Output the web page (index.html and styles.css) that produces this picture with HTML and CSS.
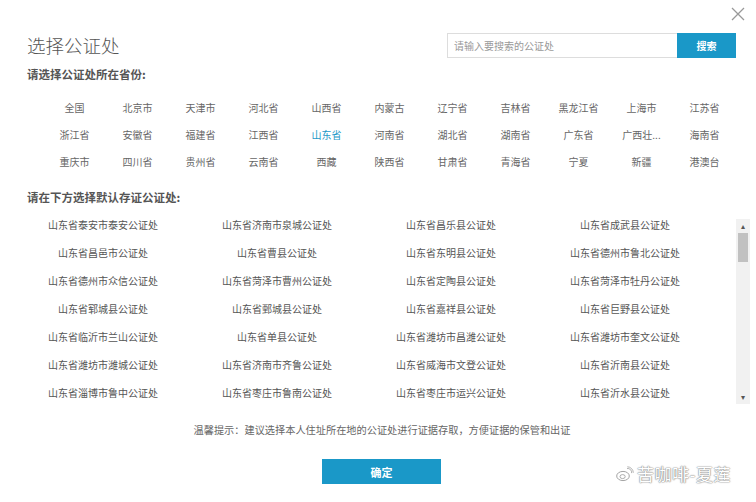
FILE: index.html
```html
<!DOCTYPE html>
<html lang="zh-CN">
<head>
    <meta charset="UTF-8">
    <meta name="viewport" content="width=device-width, initial-scale=1.0">
    <title>选择公证处</title>
    <link rel="stylesheet" href="styles.css">
</head>
<body>

    <div class="dialog">
        <!-- Close -->
        <a class="close-btn" href="#">
            <svg width="14" height="14" viewBox="0 0 14 14"><path d="M1 1L13 13M13 1L1 13" stroke="#999" stroke-width="1.3" fill="none"/></svg>
        </a>

        <!-- Header -->
        <div class="header">
            <h1>选择公证处</h1>
            <div class="search">
                <input type="text" placeholder="请输入要搜索的公证处">
                <button class="search-btn">搜索</button>
            </div>
        </div>

        <div class="label">请选择公证处所在省份:</div>

        <div class="provinces">
            <div class="prov">全国</div>
            <div class="prov">北京市</div>
            <div class="prov">天津市</div>
            <div class="prov">河北省</div>
            <div class="prov">山西省</div>
            <div class="prov">内蒙古</div>
            <div class="prov">辽宁省</div>
            <div class="prov">吉林省</div>
            <div class="prov">黑龙江省</div>
            <div class="prov">上海市</div>
            <div class="prov">江苏省</div>
            <div class="prov">浙江省</div>
            <div class="prov">安徽省</div>
            <div class="prov">福建省</div>
            <div class="prov">江西省</div>
            <div class="prov active">山东省</div>
            <div class="prov">河南省</div>
            <div class="prov">湖北省</div>
            <div class="prov">湖南省</div>
            <div class="prov">广东省</div>
            <div class="prov">广西壮...</div>
            <div class="prov">海南省</div>
            <div class="prov">重庆市</div>
            <div class="prov">四川省</div>
            <div class="prov">贵州省</div>
            <div class="prov">云南省</div>
            <div class="prov">西藏</div>
            <div class="prov">陕西省</div>
            <div class="prov">甘肃省</div>
            <div class="prov">青海省</div>
            <div class="prov">宁夏</div>
            <div class="prov">新疆</div>
            <div class="prov">港澳台</div>
        </div>

        <div class="label label-office">请在下方选择默认存证公证处:</div>

        <!-- Office list -->
        <div class="office-box">
            <div class="offices">
                <div class="office">山东省泰安市泰安公证处</div>
                <div class="office">山东省济南市泉城公证处</div>
                <div class="office">山东省昌乐县公证处</div>
                <div class="office">山东省成武县公证处</div>
                <div class="office">山东省昌邑市公证处</div>
                <div class="office">山东省曹县公证处</div>
                <div class="office">山东省东明县公证处</div>
                <div class="office">山东省德州市鲁北公证处</div>
                <div class="office">山东省德州市众信公证处</div>
                <div class="office">山东省菏泽市曹州公证处</div>
                <div class="office">山东省定陶县公证处</div>
                <div class="office">山东省菏泽市牡丹公证处</div>
                <div class="office">山东省郓城县公证处</div>
                <div class="office">山东省鄄城县公证处</div>
                <div class="office">山东省嘉祥县公证处</div>
                <div class="office">山东省巨野县公证处</div>
                <div class="office">山东省临沂市兰山公证处</div>
                <div class="office">山东省单县公证处</div>
                <div class="office">山东省潍坊市昌潍公证处</div>
                <div class="office">山东省潍坊市奎文公证处</div>
                <div class="office">山东省潍坊市潍城公证处</div>
                <div class="office">山东省济南市齐鲁公证处</div>
                <div class="office">山东省威海市文登公证处</div>
                <div class="office">山东省沂南县公证处</div>
                <div class="office">山东省淄博市鲁中公证处</div>
                <div class="office">山东省枣庄市鲁南公证处</div>
                <div class="office">山东省枣庄市运兴公证处</div>
                <div class="office">山东省沂水县公证处</div>
            </div>
            <div class="scrollbar">
                <div class="arrow">&#9652;</div>
                <div class="thumb"></div>
                <div class="track"></div>
                <div class="arrow">&#9662;</div>
            </div>
        </div>

        <div class="hint">温馨提示：建议选择本人住址所在地的公证处进行证据存取，方便证据的保管和出证</div>

        <div class="footer">
            <button class="ok-btn">确定</button>
        </div>

        <!-- Watermark -->
        <div class="watermark">
            <svg width="18" height="16" viewBox="0 0 18 16"><ellipse cx="7" cy="10" rx="6.3" ry="4.6" fill="#fff" stroke="#999" stroke-width="0.9"/><ellipse cx="6.6" cy="10.6" rx="2.6" ry="2" fill="none" stroke="#999" stroke-width="0.8"/><path d="M11 2.5a4 4 0 0 1 4.6 4.6M11.3 0.8a6 6 0 0 1 6 6" stroke="#aaa" stroke-width="0.9" fill="none"/></svg>
            <span>苦咖啡-夏莲</span>
        </div>
    </div>

</body>
</html>
```

FILE: styles.css
```css
* {
    margin: 0;
    padding: 0;
    box-sizing: border-box;
    font-family: "Noto Sans CJK SC", "Microsoft YaHei", sans-serif;
}
body {
    background: #fff;
    color: #555;
    width: 756px;
    height: 502px;
    overflow: hidden;
}
.dialog {
    position: relative;
    height: 502px;
    padding-top: 33px;
}
.close-btn {
    position: absolute;
    top: 7px;
    right: 11px;
    display: block;
    width: 14px;
    height: 14px;
}
.close-btn svg {
    display: block;
}
.header {
    display: flex;
    justify-content: space-between;
    align-items: center;
    height: 25px;
    padding: 0 20px 0 27px;
}
h1 {
    font-size: 18.5px;
    font-weight: 300;
    color: #555;
    line-height: 25px;
}
.search {
    display: flex;
    height: 25px;
}
.search input {
    width: 230px;
    height: 25px;
    border: 1px solid #ddd;
    border-right: none;
    padding: 0 6px;
    font-size: 10px;
    color: #555;
    outline: none;
}
.search input::placeholder {
    color: #999;
}
.search-btn {
    width: 59px;
    height: 25px;
    border: none;
    background: #1a98c8;
    color: #fff;
    font-size: 10px;
    font-weight: bold;
}
.label {
    margin: 9px 0 0 27px;
    font-size: 11.5px;
    font-weight: bold;
    color: #555;
    line-height: 14px;
}
.provinces {
    display: grid;
    grid-template-columns: repeat(11, 63px);
    grid-auto-rows: 27px;
    margin: 13px 0 0 43px;
}
.prov {
    text-align: center;
    font-size: 10px;
    line-height: 27px;
    color: #666;
    cursor: pointer;
}
.prov.active {
    color: #1a98c8;
}
.label-office {
    margin-top: 15px;
}
.office-box {
    display: flex;
    height: 196px;
    margin-top: 7px;
}
.offices {
    display: grid;
    grid-template-columns: repeat(4, 174px);
    grid-auto-rows: 28px;
    margin-left: 16px;
    height: 196px;
    overflow: hidden;
}
.office {
    text-align: center;
    font-size: 10px;
    line-height: 28px;
    color: #555;
    cursor: pointer;
}
.scrollbar {
    display: flex;
    flex-direction: column;
    width: 14px;
    margin: 8px 0 0 24px;
    height: 185px;
    background: #f1f1f1;
}
.arrow {
    height: 14px;
    font-size: 8px;
    line-height: 14px;
    text-align: center;
    color: #555;
}
.thumb {
    height: 29px;
    margin: 0 2px;
    background: #c1c1c1;
}
.track {
    flex: 1;
}
.hint {
    margin-top: 16px;
    padding-left: 8px;
    text-align: center;
    font-size: 10.2px;
    color: #666;
    line-height: 14px;
}
.footer {
    display: flex;
    justify-content: center;
    margin-top: 22px;
    padding-left: 7px;
}
.ok-btn {
    width: 119px;
    height: 25px;
    border: none;
    background: #1a98c8;
    color: #fff;
    font-size: 11px;
    font-weight: bold;
}
.watermark {
    position: absolute;
    left: 616px;
    top: 461px;
    display: flex;
    align-items: center;
    gap: 3px;
}
.watermark svg {
    display: block;
}
.watermark span {
    font-size: 17px;
    color: #fff;
    letter-spacing: 0.5px;
    text-shadow: 0 0 1px #888, 0 0 1px #888, 0 0 2px #aaa;
}
```
